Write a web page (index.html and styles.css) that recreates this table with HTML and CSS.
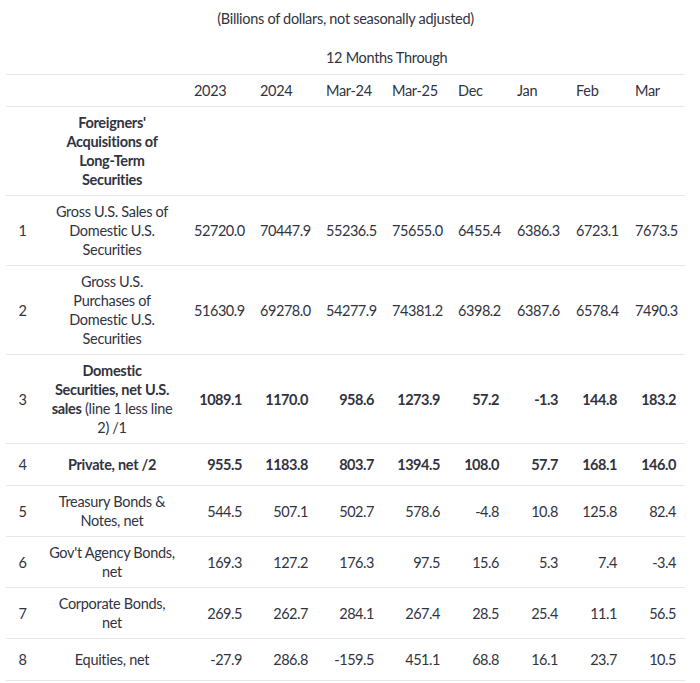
FILE: index.html
```html
<!DOCTYPE html>
<html lang="en">
<head>
<meta charset="utf-8">
<title>Foreigners' Acquisitions of Long-Term Securities</title>
<link rel="stylesheet" href="styles.css">
</head>
<body>
<div class="page">
<table class="data">
  <caption>(Billions of dollars, not seasonally adjusted)</caption>
  <colgroup>
    <col class="c-idx"><col class="c-label">
    <col class="c-yr"><col class="c-yr"><col class="c-yr"><col class="c-yr">
    <col class="c-mo"><col class="c-mo"><col class="c-mo"><col class="c-mo">
  </colgroup>
  <thead>
    <tr class="group-row">
      <th></th><th></th><th></th><th></th>
      <th class="group" colspan="2">12 Months Through</th>
      <th></th><th></th><th></th><th></th>
    </tr>
    <tr class="head-row">
      <th></th><th></th>
      <th>2023</th><th>2024</th><th>Mar-24</th><th>Mar-25</th>
      <th>Dec</th><th>Jan</th><th>Feb</th><th>Mar</th>
    </tr>
  </thead>
  <tbody>
    <tr>
      <td class="idx"></td>
      <td class="label"><b>Foreigners'<br>Acquisitions of<br>Long-Term<br>Securities</b></td>
      <td></td><td></td><td></td><td></td><td></td><td></td><td></td><td></td>
    </tr>
    <tr>
      <td class="idx">1</td>
      <td class="label">Gross U.S. Sales of<br>Domestic U.S.<br>Securities</td>
      <td class="num">52720.0</td><td class="num">70447.9</td><td class="num">55236.5</td><td class="num">75655.0</td>
      <td class="num">6455.4</td><td class="num">6386.3</td><td class="num">6723.1</td><td class="num">7673.5</td>
    </tr>
    <tr>
      <td class="idx">2</td>
      <td class="label">Gross U.S.<br>Purchases of<br>Domestic U.S.<br>Securities</td>
      <td class="num">51630.9</td><td class="num">69278.0</td><td class="num">54277.9</td><td class="num">74381.2</td>
      <td class="num">6398.2</td><td class="num">6387.6</td><td class="num">6578.4</td><td class="num">7490.3</td>
    </tr>
    <tr class="strong">
      <td class="idx">3</td>
      <td class="label"><b>Domestic<br>Securities, net U.S.<br>sales</b> (line 1 less line<br>2) /1</td>
      <td class="num">1089.1</td><td class="num">1170.0</td><td class="num">958.6</td><td class="num">1273.9</td>
      <td class="num">57.2</td><td class="num">-1.3</td><td class="num">144.8</td><td class="num">183.2</td>
    </tr>
    <tr class="strong">
      <td class="idx">4</td>
      <td class="label"><b>Private, net /2</b></td>
      <td class="num">955.5</td><td class="num">1183.8</td><td class="num">803.7</td><td class="num">1394.5</td>
      <td class="num">108.0</td><td class="num">57.7</td><td class="num">168.1</td><td class="num">146.0</td>
    </tr>
    <tr>
      <td class="idx">5</td>
      <td class="label">Treasury Bonds &amp;<br>Notes, net</td>
      <td class="num">544.5</td><td class="num">507.1</td><td class="num">502.7</td><td class="num">578.6</td>
      <td class="num">-4.8</td><td class="num">10.8</td><td class="num">125.8</td><td class="num">82.4</td>
    </tr>
    <tr>
      <td class="idx">6</td>
      <td class="label">Gov't Agency Bonds,<br>net</td>
      <td class="num">169.3</td><td class="num">127.2</td><td class="num">176.3</td><td class="num">97.5</td>
      <td class="num">15.6</td><td class="num">5.3</td><td class="num">7.4</td><td class="num">-3.4</td>
    </tr>
    <tr>
      <td class="idx">7</td>
      <td class="label">Corporate Bonds,<br>net</td>
      <td class="num">269.5</td><td class="num">262.7</td><td class="num">284.1</td><td class="num">267.4</td>
      <td class="num">28.5</td><td class="num">25.4</td><td class="num">11.1</td><td class="num">56.5</td>
    </tr>
    <tr>
      <td class="idx">8</td>
      <td class="label">Equities, net</td>
      <td class="num">-27.9</td><td class="num">286.8</td><td class="num">-159.5</td><td class="num">451.1</td>
      <td class="num">68.8</td><td class="num">16.1</td><td class="num">23.7</td><td class="num">10.5</td>
    </tr>
  </tbody>
</table>
</div>
</body>
</html>
```

FILE: styles.css
```css
html, body {
  margin: 0;
  padding: 0;
  background: #ffffff;
}

body {
  font-family: Lato, "Open Sans", "Noto Sans", sans-serif;
  font-size: 14.5px;
  letter-spacing: -0.3px;
  color: #31333f;
}

.page {
  padding: 0 15px 0 6px;
}

.data {
  width: 679px;
  table-layout: fixed;
  border-collapse: collapse;
  border-spacing: 0;
  line-height: 19px;
}

.data caption {
  padding: 9px 0 14px;
  text-align: center;
}

.c-idx { width: 33px; }
.c-label { width: 146px; }
.c-yr { width: 66px; }
.c-mo { width: 59px; }

.data th,
.data td {
  padding: 6px 9px;
  font-weight: 400;
  vertical-align: middle;
}

.data th {
  text-align: left;
  white-space: nowrap;
}

.group-row th {
  border: none;
  padding-top: 6px;
  padding-bottom: 7px;
}

.head-row th {
  border-top: 1px solid #e8e8ea;
  border-bottom: 1px solid #e8e8ea;
}

.data tbody td {
  border-bottom: 1px solid #e8e8ea;
}

.data tbody tr {
  height: 42px;
}

.idx {
  text-align: center;
  padding-left: 4px;
  padding-right: 4px;
}

.data td.label {
  text-align: center;
  white-space: nowrap;
  padding-left: 4px;
  padding-right: 4px;
}

.label b {
  font-weight: 700;
}

.num {
  text-align: right;
  white-space: nowrap;
  letter-spacing: -0.45px;
}

.strong .num {
  font-weight: 700;
}
```
